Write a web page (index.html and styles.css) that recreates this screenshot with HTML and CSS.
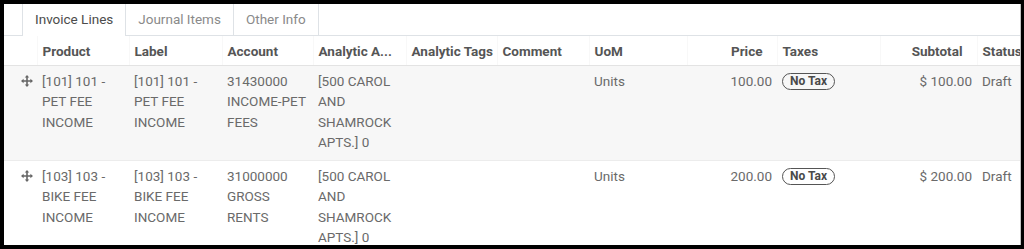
FILE: index.html
```html
<!DOCTYPE html>
<html lang="en">
<head>
<meta charset="utf-8">
<title>Invoice Lines</title>
<link rel="stylesheet" href="styles.css">
</head>
<body>
<div class="frame">
  <ul class="tabs">
    <li class="tab active">Invoice Lines</li>
    <li class="tab">Journal Items</li>
    <li class="tab">Other Info</li>
  </ul>
  <table class="lines">
    <colgroup>
      <col class="c-handle"><col class="c-product"><col class="c-label"><col class="c-account">
      <col class="c-analytic"><col class="c-tags"><col class="c-comment"><col class="c-uom">
      <col class="c-price"><col class="c-taxes"><col class="c-subtotal"><col class="c-status">
    </colgroup>
    <thead>
      <tr>
        <th></th>
        <th>Product</th>
        <th>Label</th>
        <th>Account</th>
        <th>Analytic A...</th>
        <th>Analytic Tags</th>
        <th>Comment</th>
        <th>UoM</th>
        <th class="num">Price</th>
        <th>Taxes</th>
        <th class="num">Subtotal</th>
        <th>Status</th>
      </tr>
    </thead>
    <tbody>
      <tr class="row-alt">
        <td class="handle"><svg class="drag" viewBox="0 0 12 12" aria-hidden="true"><path d="M6 1.2V10.8M1.2 6H10.8" /><path class="head" d="M6 0 L8.2 2.6 H3.8 Z M6 12 L8.2 9.4 H3.8 Z M0 6 L2.6 3.8 V8.2 Z M12 6 L9.4 3.8 V8.2 Z"/></svg></td>
        <td>[101] 101 - PET FEE INCOME</td>
        <td>[101] 101 - PET FEE INCOME</td>
        <td>31430000 INCOME-PET FEES</td>
        <td>[500 CAROL AND SHAMROCK APTS.] 0</td>
        <td></td>
        <td></td>
        <td>Units</td>
        <td class="num">100.00</td>
        <td><span class="badge">No Tax</span></td>
        <td class="num">$ 100.00</td>
        <td>Draft</td>
      </tr>
      <tr>
        <td class="handle"><svg class="drag" viewBox="0 0 12 12" aria-hidden="true"><path d="M6 1.2V10.8M1.2 6H10.8" /><path class="head" d="M6 0 L8.2 2.6 H3.8 Z M6 12 L8.2 9.4 H3.8 Z M0 6 L2.6 3.8 V8.2 Z M12 6 L9.4 3.8 V8.2 Z"/></svg></td>
        <td>[103] 103 - BIKE FEE INCOME</td>
        <td>[103] 103 - BIKE FEE INCOME</td>
        <td>31000000 GROSS RENTS</td>
        <td>[500 CAROL AND SHAMROCK APTS.] 0</td>
        <td></td>
        <td></td>
        <td>Units</td>
        <td class="num">200.00</td>
        <td><span class="badge">No Tax</span></td>
        <td class="num">$ 200.00</td>
        <td>Draft</td>
      </tr>
    </tbody>
  </table>
</div>
</body>
</html>
```

FILE: styles.css
```css
html, body {
  margin: 0;
  padding: 0;
  background: #000;
}
body {
  width: 1024px;
  height: 249px;
  overflow: hidden;
  font-family: Roboto, "Liberation Sans", sans-serif;
  font-size: 13.5px;
  color: #6a6a6a;
}
.frame {
  margin: 4px 3px 4px 4px;
  width: 1016px;
  height: 241px;
  background: #fff;
  border-right: 1px solid #c4c4c4;
  overflow: hidden;
}
.tabs {
  list-style: none;
  margin: 0;
  padding: 0 0 0 18px;
  display: flex;
  border-bottom: 1px solid #dee2e6;
  height: 31px;
}
.tab {
  padding: 0 12px;
  line-height: 31px;
  height: 31px;
  color: #8a8a8a;
  border-right: 1px solid #dee2e6;
  background: #fff;
}
.tab.active {
  color: #4c4c4c;
  border-left: 1px solid #dee2e6;
  height: 32px;
}
.lines {
  table-layout: fixed;
  border-collapse: collapse;
  width: 1033px;
}
.c-handle { width: 33px; }
.c-product { width: 92px; }
.c-label { width: 93px; }
.c-account { width: 91px; }
.c-analytic { width: 93px; }
.c-tags { width: 91px; }
.c-comment { width: 92px; }
.c-uom { width: 98px; }
.c-price { width: 90px; }
.c-taxes { width: 103px; }
.c-subtotal { width: 97px; }
.c-status { width: 60px; }

th {
  text-align: left;
  font-weight: 700;
  color: #555;
  line-height: 20px;
  padding: 5px 5px 4px 5px;
  white-space: nowrap;
  overflow: hidden;
  border-bottom: 1px solid #e3e3e3;
}
th + th {
  border-left: 1px solid #f8f8f8;
}
th.num {
  text-align: right;
  padding-right: 14px;
}
td {
  vertical-align: top;
  line-height: 20.3px;
  padding: 5px 5px 8px 5px;
  border-bottom: 1px solid #ececec;
  word-wrap: break-word;
}
td.num {
  text-align: right;
}
.row-alt td {
  background: #f7f7f7;
}
td.handle {
  padding-left: 17px;
  padding-right: 0;
}
.drag {
  display: block;
  width: 12px;
  height: 12px;
  margin-top: 4px;
}
.drag path {
  stroke: #666;
  stroke-width: 1.6;
  fill: none;
}
.drag path.head {
  stroke: none;
  fill: #666;
}
.badge {
  display: inline-block;
  border: 1.5px solid #555;
  border-radius: 9px;
  padding: 0 7px;
  line-height: 15px;
  font-size: 12px;
  font-weight: 700;
  color: #4a4a4a;
  vertical-align: 1px;
}
```
